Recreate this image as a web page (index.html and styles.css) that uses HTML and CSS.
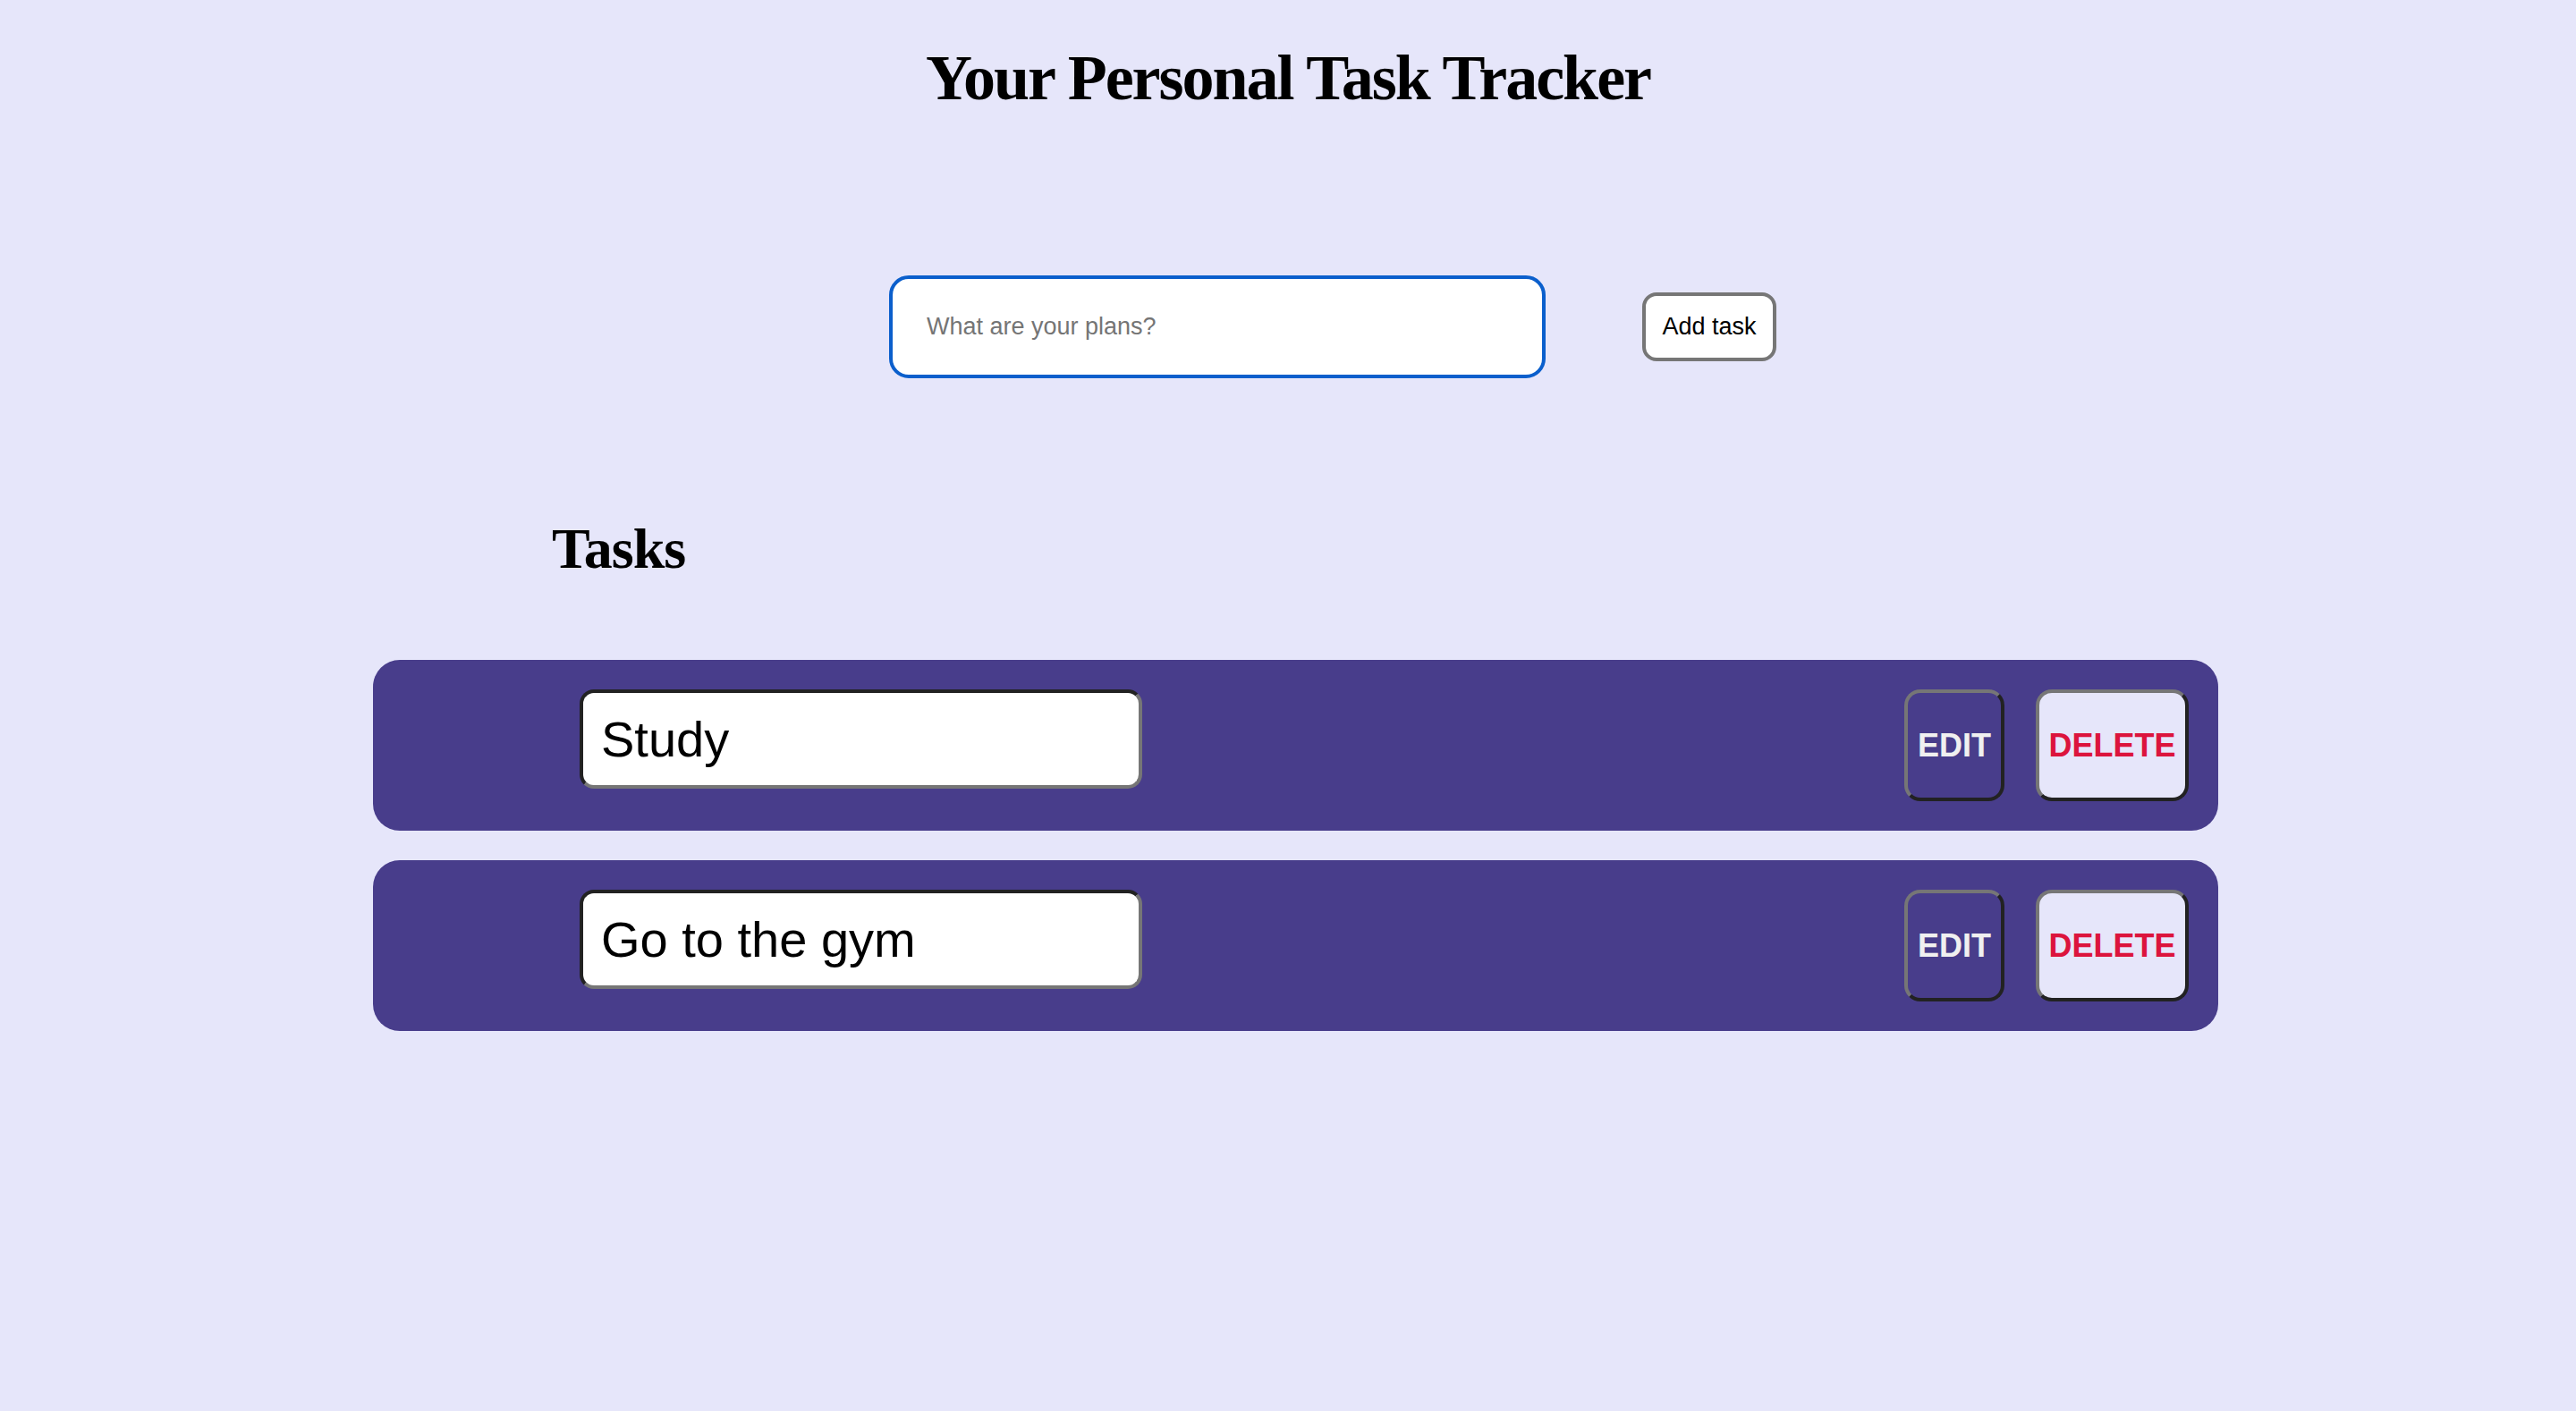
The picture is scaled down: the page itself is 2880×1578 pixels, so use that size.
FILE: index.html
```html
<!DOCTYPE html>
<html lang="en">
<head>
<meta charset="utf-8">
<title>Your Personal Task Tracker</title>
<link rel="stylesheet" href="styles.css">
</head>
<body>
  <h1 class="title">Your Personal Task Tracker</h1>
  <form class="add-form">
    <input class="new-task" type="text" placeholder="What are your plans?">
    <button class="add-btn" type="button">Add task</button>
  </form>
  <h2 class="tasks-heading">Tasks</h2>
  <div class="task-list">
    <div class="task">
      <input class="task-text" type="text" value="Study" readonly>
      <button class="edit-btn" type="button">EDIT</button>
      <button class="delete-btn" type="button">DELETE</button>
    </div>
    <div class="task">
      <input class="task-text" type="text" value="Go to the gym" readonly>
      <button class="edit-btn" type="button">EDIT</button>
      <button class="delete-btn" type="button">DELETE</button>
    </div>
  </div>
</body>
</html>
```

FILE: styles.css
```css
html, body {
  margin: 0;
  padding: 0;
}
body {
  background: #e6e6fa;
  min-height: 1578px;
  font-family: "Liberation Sans", Arial, sans-serif;
}
.title {
  margin: 0;
  padding-top: 44px;
  text-align: center;
  font-family: "Liberation Serif", "Times New Roman", serif;
  font-weight: 700;
  font-size: 72px;
  line-height: 1.2;
  letter-spacing: -2px;
  color: #000;
}
.add-form {
  display: flex;
  align-items: center;
  gap: 108px;
  margin-top: 178px;
  padding-left: 994px;
}
.new-task {
  box-sizing: border-box;
  width: 734px;
  height: 115px;
  border: 4px solid #0b5fcc;
  border-radius: 22px;
  padding: 0 38px;
  font-family: "Liberation Sans", Arial, sans-serif;
  font-size: 27px;
  background: #fff;
  outline: none;
}
.new-task::placeholder {
  color: #757575;
}
.add-btn {
  box-sizing: border-box;
  width: 150px;
  height: 77px;
  background: #fff;
  border: 4px solid #767676;
  border-radius: 16px;
  font-family: "Liberation Sans", Arial, sans-serif;
  font-size: 27px;
  color: #000;
  padding: 0;
}
.tasks-heading {
  margin: 153px 0 0;
  padding-left: 617px;
  font-family: "Liberation Serif", "Times New Roman", serif;
  font-weight: 700;
  font-size: 64px;
  line-height: 1.2;
  letter-spacing: -1px;
}
.task-list {
  display: flex;
  flex-direction: column;
  gap: 33px;
  width: 2063px;
  margin: 85px 0 0 417px;
}
.task {
  box-sizing: border-box;
  display: flex;
  align-items: flex-start;
  height: 191px;
  padding: 33px 33px 33px 231px;
  background: #483d8b;
  border-radius: 30px;
}
.task-text {
  box-sizing: border-box;
  width: 629px;
  height: 111px;
  border: 4px solid;
  border-top-color: #222;
  border-left-color: #222;
  border-right-color: #767676;
  border-bottom-color: #767676;
  border-radius: 16px;
  padding: 0 20px;
  font-family: "Liberation Sans", Arial, sans-serif;
  font-size: 56px;
  color: #000;
  background: #fff;
  outline: none;
}
.edit-btn,
.delete-btn {
  box-sizing: border-box;
  height: 125px;
  border: 4px solid;
  border-top-color: #767676;
  border-left-color: #767676;
  border-right-color: #222;
  border-bottom-color: #222;
  border-radius: 18px;
  font-family: "Liberation Sans", Arial, sans-serif;
  font-weight: 700;
  font-size: 36px;
  padding: 0;
}
.edit-btn {
  width: 112px;
  margin-left: auto;
  background: #483d8b;
  color: #f0f0f0;
}
.delete-btn {
  width: 171px;
  margin-left: 35px;
  background: #e6e6fa;
  color: #dc143c;
}
```
